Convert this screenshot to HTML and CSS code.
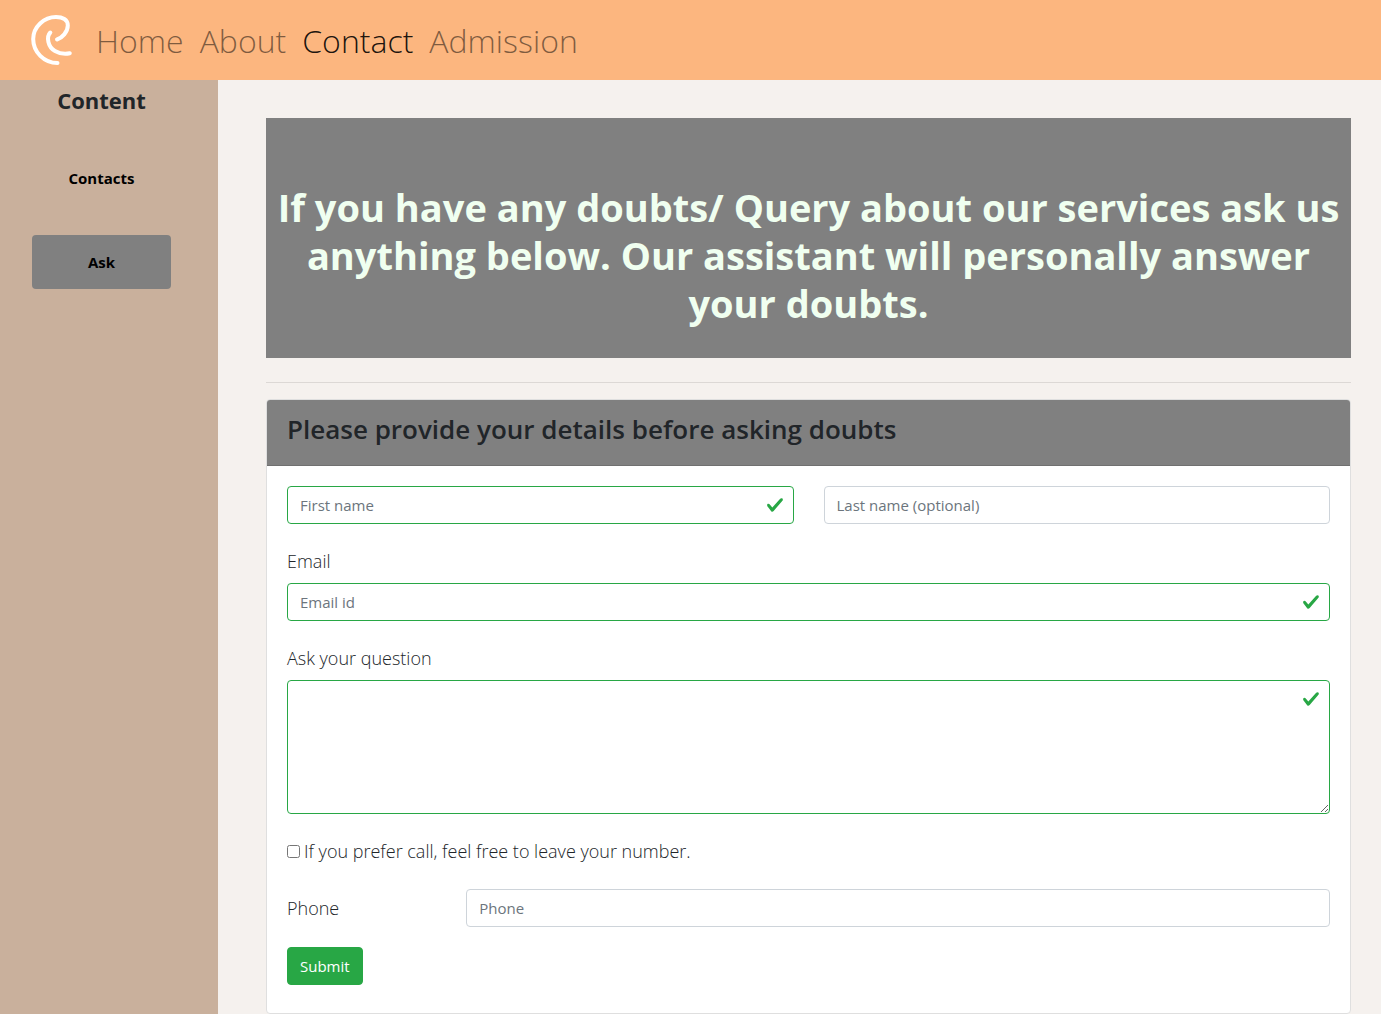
FILE: index.html
```html
<!DOCTYPE html>
<html lang="en">
<head>
  <meta charset="utf-8">
  <meta name="viewport" content="width=device-width, initial-scale=1">
  <title>Contact</title>
  <link rel="stylesheet" href="styles.css">
</head>
<body>
  <header class="navbar">
    <a class="brand" href="#" aria-label="Start page">
      <svg viewBox="0 0 64 70" fill="none" stroke="#fff" stroke-linecap="round" stroke-linejoin="round">
        <path stroke-width="4" d="M37 34.500C42 33 47.800 27 47.800 20.500C47.800 14.500 42.500 12 36 12C24 12 13.200 22 13.200 34C13.200 47 24 58 37.500 58"/>
        <path stroke-width="4" d="M30.300 27.500C26 32 28 42 35 46C39.500 48.600 45 49.400 49.800 48.300"/>
      </svg>
    </a>
    <nav class="nav">
      <a href="#">Home</a>
      <a href="#">About</a>
      <a class="current" href="#" aria-current="page">Contact</a>
      <a href="#">Admission</a>
    </nav>
  </header>
  <div class="layout">
    <aside class="sidebar">
      <h2 class="sidebar-title">Content</h2>
      <nav class="pills">
        <a class="pill" href="#">Contacts</a>
        <a class="pill active" href="#" aria-current="true">Ask</a>
      </nav>
    </aside>
    <main class="main">
      <h1 class="banner">If you have any doubts/ Query about our services ask us anything below. Our assistant will personally answer your doubts.</h1>
      <hr class="rule">
      <section class="card">
        <h2 class="card-header">Please provide your details before asking doubts</h2>
        <form class="card-body">
          <div class="names">
            <input class="control valid" type="text" placeholder="First name" aria-label="First name">
            <input class="control" type="text" placeholder="Last name (optional)" aria-label="Last name (optional)">
          </div>
          <div class="field">
            <label for="email">Email</label>
            <input class="control valid" id="email" type="email" placeholder="Email id">
          </div>
          <div class="field">
            <label for="question">Ask your question</label>
            <textarea class="control valid" id="question" rows="5"></textarea>
          </div>
          <div class="check">
            <input id="call" type="checkbox">
            <label for="call">If you prefer call, feel free to leave your number.</label>
          </div>
          <div class="phone">
            <label for="phone">Phone</label>
            <input class="control" id="phone" type="tel" placeholder="Phone">
          </div>
          <button class="submit" type="submit">Submit</button>
        </form>
      </section>
    </main>
  </div>
</body>
</html>
```
FILE: styles.css
```css
* {
  box-sizing: border-box;
}

body {
  margin: 0;
  min-height: 100vh;
  display: flex;
  flex-direction: column;
  background: #f5f1ee;
  color: #212529;
  font-family: "Segoe UI", "Open Sans", "Noto Sans", sans-serif;
  font-size: 18px;
  font-weight: 300;
  line-height: 27px;
}

h1,
h2 {
  margin: 0;
}

a {
  text-decoration: none;
}

.navbar {
  display: flex;
  align-items: center;
  gap: 4px;
  height: 80px;
  padding: 0 20px;
  background: #fcb67f;
}

.brand svg {
  display: block;
  width: 64px;
  height: 70px;
}

.nav {
  display: flex;
  padding-top: 2px;
  font-size: 32px;
  line-height: 48px;
}

.nav a {
  padding: 0 8px;
  color: rgba(0, 0, 0, 0.5);
}

.nav .current {
  color: rgba(0, 0, 0, 0.9);
}

.layout {
  flex: 1;
  display: flex;
}

.sidebar {
  flex: 0 0 218px;
  padding: 6px 47px 0 32px;
  background: #c9b09c;
  text-align: center;
}

.sidebar-title {
  font-size: 22px;
  font-weight: 700;
  line-height: 29px;
}

.pills {
  display: flex;
  flex-direction: column;
  gap: 30px;
  margin-top: 36px;
}

.pill {
  padding: 15px;
  border-radius: 4px;
  color: #000;
  font-size: 15px;
  font-weight: 700;
  line-height: 24px;
}

.pill.active {
  background: #808080;
}

.main {
  flex: 1;
  min-width: 0;
  padding: 38px 30px 0 48px;
}

.banner {
  padding: 65px 10px 31px;
  background: #808080;
  color: #f0fff0;
  font-size: 38px;
  font-weight: 700;
  line-height: 48px;
  text-align: center;
}

.rule {
  margin: 24px 0 16px;
  border: 0;
  border-top: 1px solid rgba(0, 0, 0, 0.1);
}

.card {
  border: 1px solid #dfdfdf;
  border-radius: 4px;
  background: #fff;
}

.card-header {
  padding: 12px 20px 19px;
  border-bottom: 1px solid #707070;
  border-radius: 3px 3px 0 0;
  background: #808080;
  font-size: 26px;
  font-weight: 600;
  line-height: 34px;
}

.card-body {
  display: flex;
  flex-direction: column;
  gap: 24px;
  padding: 20px 20px 28px;
}

.names {
  display: grid;
  grid-template-columns: 1fr 1fr;
  gap: 30px;
}

.field {
  display: flex;
  flex-direction: column;
  gap: 8px;
}

.control {
  display: block;
  width: 100%;
  min-width: 0;
  min-height: 38px;
  padding: 6px 12px;
  border: 1px solid #ced4da;
  border-radius: 4px;
  background-color: #fff;
  color: #495057;
  font-family: inherit;
  font-size: 15px;
  font-weight: 400;
  line-height: 24px;
}

.control::placeholder {
  color: #6c757d;
  opacity: 1;
}

.control.valid {
  border-color: #28a745;
  background-image: url("data:image/svg+xml,%3csvg xmlns='http://www.w3.org/2000/svg' viewBox='0 0 8 8'%3e%3cpath fill='%2328a745' d='M2.3 6.73L.6 4.53c-.4-1.04.46-1.4 1.1-.8l1.1 1.4 3.4-3.8c.6-.63 1.6-.27 1.2.7l-4 4.6c-.43.5-.8.4-1.1.1z'/%3e%3c/svg%3e");
  background-repeat: no-repeat;
  background-position: top 9px right 9px;
  background-size: 18px 18px;
}

textarea.control {
  resize: vertical;
}

.check {
  display: flex;
  align-items: center;
  gap: 4px;
}

.check input {
  width: 13px;
  height: 13px;
  margin: 0;
}

.phone {
  display: grid;
  grid-template-columns: 1fr calc(83% - 2px);
  align-items: center;
}

.submit {
  align-self: flex-start;
  margin-top: -4px;
  padding: 6px 12px;
  border: 1px solid #28a745;
  border-radius: 4px;
  background: #28a745;
  color: #fff;
  font-family: inherit;
  font-size: 15px;
  font-weight: 400;
  line-height: 24px;
}
```
